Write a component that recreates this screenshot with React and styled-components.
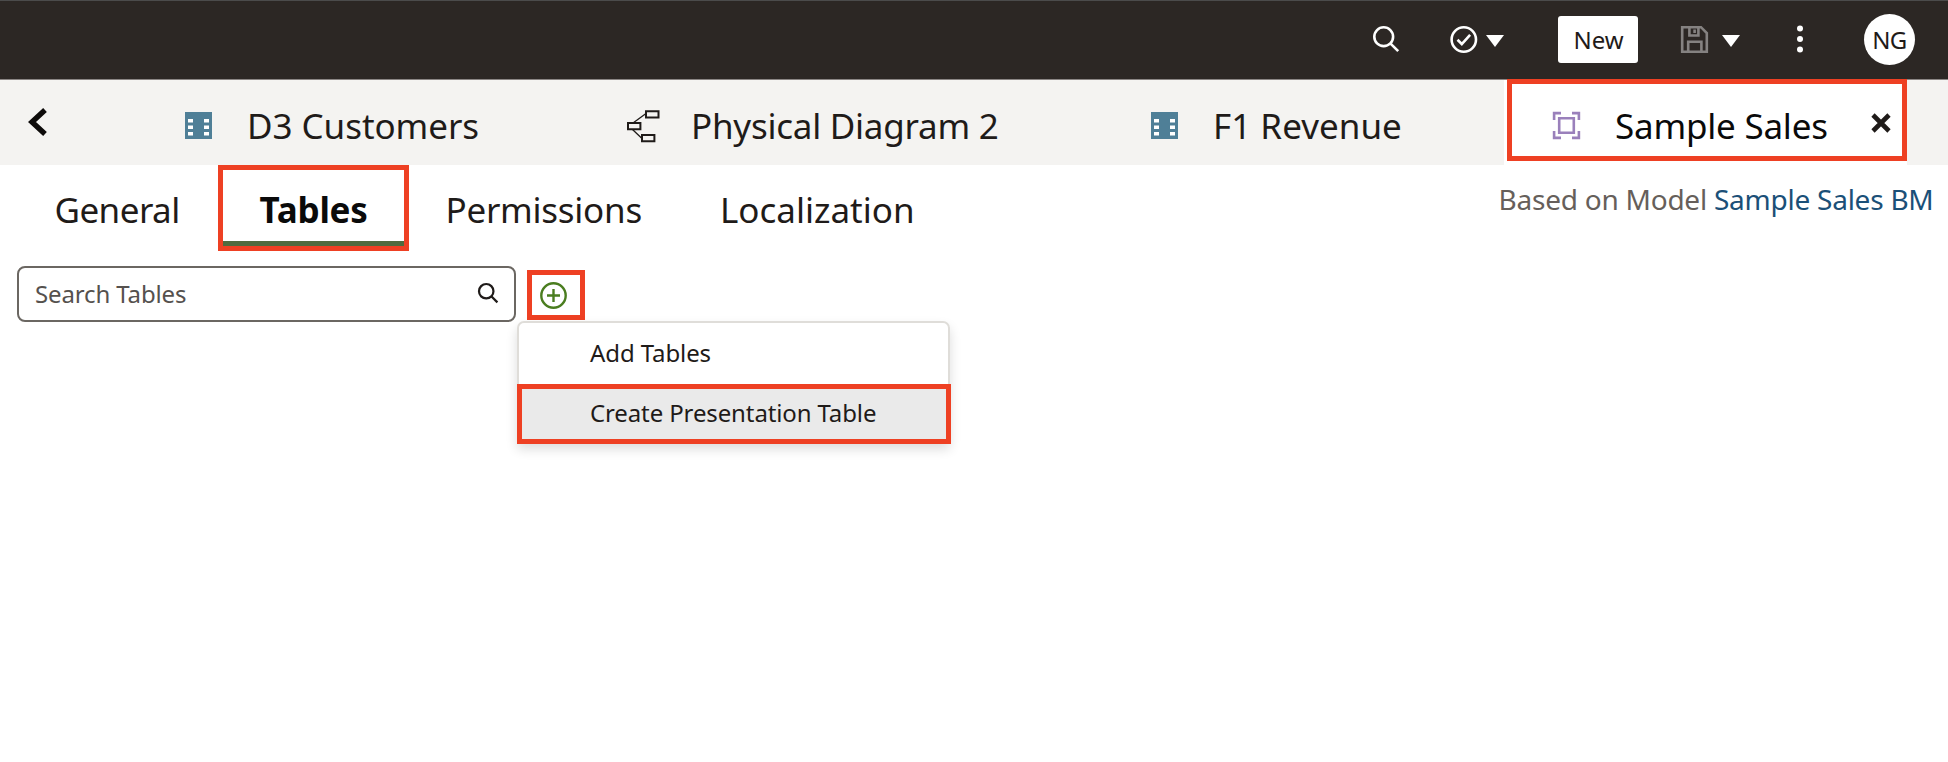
import React from "react";
import styled, { createGlobalStyle } from "styled-components";

const RED = "#ee4023";

const GlobalStyle = createGlobalStyle`
  * { box-sizing: border-box; }
  body { margin: 0; background: #fff; }
  button, input { font: inherit; color: inherit; border: 0; padding: 0; margin: 0; background: none; }
  svg { display: block; flex: none; overflow: visible; }
`;

const Page = styled.div`
  width: 1948px;
  height: 762px;
  overflow: hidden;
  background: #fff;
  color: #1f1b19;
  font-family: "Noto Sans", "Open Sans", sans-serif;
`;

const TopBar = styled.header`
  display: flex;
  align-items: center;
  justify-content: flex-end;
  height: 80px;
  padding: 0 33px 2px 0;
  background: #2c2724;
  border-top: 1px solid #4b4b4b;
  border-bottom: 1px solid #8b8684;
  color: #fff;
`;

const IconButton = styled.button`
  display: flex;
  align-items: center;
  gap: ${(p) => p.$gap || 9}px;
  margin-right: ${(p) => p.$after}px;
`;

const NewButton = styled.button`
  width: 80px;
  height: 47px;
  margin-right: 43px;
  padding-left: 1px;
  border-radius: 3px;
  background: #fff;
  color: #1f1b19;
  font-size: 24px;
  line-height: 47px;
`;

const Avatar = styled.div`
  width: 51px;
  height: 51px;
  border-radius: 50%;
  background: #fff;
  color: #1f1b19;
  font-size: 24px;
  line-height: 51px;
  text-align: center;
  letter-spacing: -0.6px;
`;

const EditorTabs = styled.nav`
  display: flex;
  height: 85px;
  background: #f4f3f1;
`;

const BackButton = styled.button`
  display: flex;
  width: 136px;
  padding: 28px 0 0 28px;
`;

const EditorTab = styled.div`
  display: flex;
  width: ${(p) => p.$width}px;
  height: 85px;
  background: ${(p) => (p.$active ? "#fff" : "transparent")};
  color: ${(p) => (p.$active ? "#0a0a0a" : "#1f1b19")};
  padding-left: ${(p) => (p.$active ? 3 : 49)}px;
`;

const Highlight = styled.div`
  display: flex;
  border: 5px solid ${RED};
`;

const ActiveTabFrame = styled(Highlight)`
  width: 400px;
  height: 82px;
  padding-left: 41px;
  margin-top: -1px;
`;

const TabIcon = styled.span`
  width: 62px;
  padding-top: ${(p) => (p.$active ? 28 : 32)}px;
`;

const TabLabel = styled.span`
  font-size: 35px;
  line-height: 48px;
  letter-spacing: ${(p) => p.$spacing}px;
  white-space: nowrap;
  padding-top: ${(p) => (p.$active ? 18 : 22)}px;
`;

const CloseButton = styled.button`
  display: flex;
  margin-left: auto;
  padding: 29px 11px 0 0;
`;

const SubHeader = styled.div`
  display: flex;
  height: 86px;
`;

const SubTab = styled.button`
  height: 86px;
  width: ${(p) => p.$width}px;
  padding: 4px 0 0 ${(p) => p.$pad}px;
  text-align: left;
  font-size: 35px;
  letter-spacing: ${(p) => p.$spacing}px;
  line-height: 82px;
  white-space: nowrap;
`;

const ActiveSubTab = styled(Highlight)`
  width: 191px;
  height: 86px;
`;

const ActiveSubTabLabel = styled.span`
  width: 181px;
  height: 76px;
  padding: 3px 0 0 36.5px;
  border-bottom: 5px solid #4f6b3f;
  color: #0a0a0a;
  font-size: 35px;
  font-weight: 700;
  letter-spacing: ${(p) => p.$spacing}px;
  line-height: 73px;
`;

const ModelInfo = styled.p`
  margin: 12px 0 0 auto;
  padding-right: 14.5px;
  font-size: 28px;
  line-height: 44px;
  letter-spacing: ${(p) => p.$spacing}px;
  white-space: nowrap;
  color: #665f5b;
`;

const ModelLink = styled.a`
  color: #1b5078;
`;

const Toolbar = styled.div`
  display: flex;
  align-items: flex-start;
  padding: 15px 0 0 17px;
`;

const SearchBox = styled.label`
  display: flex;
  align-items: center;
  width: 499px;
  height: 56px;
  padding: 0 16px 3px;
  border: 2px solid #6b6762;
  border-radius: 8px;
  color: #1f1b19;
`;

const SearchText = styled.span`
  flex: 1;
  font-size: 24px;
  letter-spacing: ${(p) => p.$spacing}px;
  line-height: 48px;
  padding-top: 2px;
  color: #55514e;
`;

const AddArea = styled.div`
  position: relative;
  margin: 4px 0 0 11px;
`;

const AddButton = styled(Highlight)`
  width: 58px;
  height: 50px;
  padding: 7px 0 0 8px;
`;

const Menu = styled.div`
  position: absolute;
  left: -10px;
  top: 51px;
  width: 433px;
  height: 122px;
  background: #fff;
  border: 2px solid #dfddd9;
  border-radius: 7px 7px 0 0;
  box-shadow: 0 6px 12px rgba(0, 0, 0, 0.14);
`;

const MenuItem = styled.div`
  height: 61px;
  padding-left: 71px;
  font-size: 24px;
  line-height: 59px;
  letter-spacing: ${(p) => p.$spacing}px;
  white-space: nowrap;
`;

const MenuHighlight = styled(Highlight)`
  width: 434px;
  height: 60px;
  margin-left: -2px;
  background: #eaeaea;
`;

const HighlightedItem = styled(MenuItem)`
  height: 50px;
  padding-left: 68px;
  line-height: 47px;
`;

const SearchIcon = ({ size, stroke = 2.6 }) => (
  <svg width={size} height={size} viewBox="0 0 26 26" fill="none" stroke="currentColor" strokeWidth={stroke}>
    <circle cx="10.7" cy="10.7" r="9.4" />
    <path d="M17.3 17.3L25.2 25.2" />
  </svg>
);

const Caret = () => (
  <svg width="18" height="12" viewBox="0 0 18 12">
    <path d="M0 2H18L9 14Z" fill="#fff" />
  </svg>
);

const CheckIcon = () => (
  <svg width="27" height="27" viewBox="0 0 27 27" fill="none" stroke="#fff" strokeWidth="2.6">
    <circle cx="13.8" cy="13.5" r="12.2" />
    <path d="M7.5 13.8L11.8 18L20.1 8.8" />
  </svg>
);

const SaveIcon = () => (
  <svg width="27" height="27" viewBox="0 0 27 27" fill="none" stroke="#858281" strokeWidth="2.6">
    <path d="M1.2 1.2H20L25.8 7V25.8H1.2Z" />
    <path d="M8.4 1.2V9.5H17.4V1.2M7.2 25.8V15.8H20.4V25.8M13.6 3.5V7" />
  </svg>
);

const DotsIcon = () => (
  <svg width="8" height="28" viewBox="0 0 8 28" fill="#fff">
    <circle cx="4" cy="3.4" r="3" />
    <circle cx="4" cy="14" r="3" />
    <circle cx="4" cy="24.6" r="3" />
  </svg>
);

const TableIcon = () => (
  <svg width="27" height="27" viewBox="0 0 27 27">
    <path fill="#4f7f97" d="M0 0H27V27H0Z" />
    <path fill="#fff" d="M3 7H8V10.5H3ZM3 13.5H8V17H3ZM3 20H8V23.5H3ZM19 7H24V10.5H19ZM19 13.5H24V17H19ZM19 20H24V23.5H19Z" />
  </svg>
);

const DiagramIcon = () => (
  <svg width="33" height="32" viewBox="2 2 33 32" fill="none" stroke="#1f1b19" strokeWidth="2">
    <path d="M19 1.2H31.5V7.4H19ZM1 13H13.4V19.2H1ZM15 25H27.4V31.2H15Z" />
    <path strokeWidth="1.3" d="M6 13L19 3.5M5.5 19.5L15 28.5" />
  </svg>
);

const SubjectIcon = () => (
  <svg width="27" height="27" viewBox="0 0 27 27" fill="none" stroke="#9a80bb" strokeWidth="2.6">
    <path d="M6.2 6.2H20.8V20.8H6.2Z" />
    <path d="M8 1.1H1.1V8M19 1.1H25.9V8M25.9 19V25.9H19M8 25.9H1.1V19" />
  </svg>
);

const PlusIcon = () => (
  <svg width="27" height="27" viewBox="0 0 27 27" fill="none" stroke="#4a7d1f" strokeWidth="2.4">
    <circle cx="13.5" cy="13.5" r="12.2" />
    <path d="M13.5 7V20M7 13.5H20" />
  </svg>
);

const editorTabs = [
  { label: "D3 Customers", width: 444, spacing: -0.05, Icon: TableIcon },
  { label: "Physical Diagram 2", width: 522, spacing: -0.25, Icon: DiagramIcon },
  { label: "F1 Revenue", width: 402, spacing: 0.02, Icon: TableIcon },
];

export default function App() {
  return (
    <Page>
      <GlobalStyle />
      <TopBar>
        <IconButton $after={51} aria-label="Search"><SearchIcon size={26} /></IconButton>
        <IconButton $after={54} aria-label="Validate"><CheckIcon /><Caret /></IconButton>
        <NewButton>New</NewButton>
        <IconButton $after={56} $gap={14} aria-label="Save"><SaveIcon /><Caret /></IconButton>
        <IconButton $after={60} aria-label="More"><DotsIcon /></IconButton>
        <Avatar>NG</Avatar>
      </TopBar>
      <EditorTabs>
        <BackButton aria-label="Back">
          <svg width="19" height="28" viewBox="0 0 19 28" fill="none" stroke="#0d0b0a" strokeWidth="5.4">
            <path d="M17 2L4 14L17 26" />
          </svg>
        </BackButton>
        {editorTabs.map(({ label, width, spacing, Icon }) => (
          <EditorTab key={label} $width={width}>
            <TabIcon><Icon /></TabIcon>
            <TabLabel $spacing={spacing}>{label}</TabLabel>
          </EditorTab>
        ))}
        <EditorTab $active $width={403}>
          <ActiveTabFrame>
            <TabIcon $active><SubjectIcon /></TabIcon>
            <TabLabel $active $spacing={-0.22}>Sample Sales</TabLabel>
            <CloseButton aria-label="Close">
              <svg width="20" height="20" viewBox="0 0 20 20" stroke="#1f1b19" strokeWidth="4.6">
                <path d="M2 2L18 18M18 2L2 18" />
              </svg>
            </CloseButton>
          </ActiveTabFrame>
        </EditorTab>
      </EditorTabs>
      <SubHeader>
        <SubTab $width={218} $pad={54.5} $spacing={-0.55}>General</SubTab>
        <ActiveSubTab><ActiveSubTabLabel $spacing={-0.2}>Tables</ActiveSubTabLabel></ActiveSubTab>
        <SubTab $width={276} $pad={36.5} $spacing={-0.26}>Permissions</SubTab>
        <SubTab $width={270} $pad={35} $spacing={0}>Localization</SubTab>
        <ModelInfo $spacing={-0.24}>Based on Model <ModelLink>Sample Sales BM</ModelLink></ModelInfo>
      </SubHeader>
      <Toolbar>
        <SearchBox>
          <SearchText $spacing={-0.13}>Search Tables</SearchText>
          <SearchIcon size={20} stroke={2.9} />
        </SearchBox>
        <AddArea>
          <AddButton><PlusIcon /></AddButton>
          <Menu>
            <MenuItem $spacing={-0.1}>Add Tables</MenuItem>
            <MenuHighlight><HighlightedItem $spacing={-0.12}>Create Presentation Table</HighlightedItem></MenuHighlight>
          </Menu>
        </AddArea>
      </Toolbar>
    </Page>
  );
}
